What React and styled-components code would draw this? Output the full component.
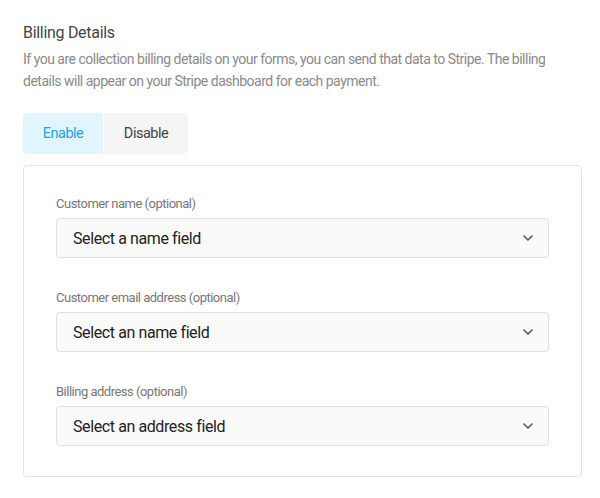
import React from "react";
import styled, { createGlobalStyle } from "styled-components";

const Global = createGlobalStyle`
  html, body { margin: 0; padding: 0; background: #ffffff; }
  body { font-family: Roboto, "Liberation Sans", sans-serif; -webkit-font-smoothing: antialiased; }
  * { box-sizing: border-box; }
`;

const Page = styled.div`
  width: 600px;
  padding: 23px 18px 0 23px;
`;

const Title = styled.h2`
  margin: 0 0 5px;
  font-size: 16px;
  line-height: 20px;
  font-weight: 400;
  letter-spacing: -0.3px;
  color: #444444;
`;

const Description = styled.p`
  margin: 0;
  font-size: 14px;
  line-height: 22px;
  letter-spacing: -0.5px;
  color: #8a8a8a;
  width: 540px;
`;

const Toggle = styled.div`
  display: inline-flex;
  gap: 1px;
  margin-top: 21px;
  border-radius: 4px;
  overflow: hidden;
`;

const ToggleButton = styled.button`
  height: 41px;
  padding: 0;
  width: ${(p) => p.$w}px;
  border: none;
  font-family: inherit;
  font-size: 14.5px;
  letter-spacing: -0.5px;
  background: ${(p) => (p.$active ? "#e1f5fe" : "#f5f5f5")};
  color: ${(p) => (p.$active ? "#1ea5e4" : "#444444")};
  cursor: pointer;
`;

const Panel = styled.div`
  margin-top: 11px;
  width: 559px;
  border: 1px solid #e2e2e2;
  border-radius: 4px;
  padding: 30px 32px 30px;
  display: flex;
  flex-direction: column;
  gap: 32px;
`;

const Field = styled.div`
  display: flex;
  flex-direction: column;
  gap: 6px;
`;

const Label = styled.label`
  font-size: 13px;
  line-height: 16px;
  letter-spacing: -0.5px;
  color: #777777;
`;

const Select = styled.div`
  height: 40px;
  border: 1px solid #e0e0e0;
  border-radius: 4px;
  background: #fafafa;
  display: flex;
  align-items: center;
  justify-content: space-between;
  padding: 0 15px 0 16px;
  font-size: 16px;
  letter-spacing: -0.4px;
  color: #222222;
`;

const Chevron = () => (
  <svg width="10" height="6" viewBox="0 0 10 6" fill="none">
    <path d="M1 1l4 4 4-4" stroke="#555" strokeWidth="1.6" strokeLinecap="round" strokeLinejoin="round" />
  </svg>
);

const fields = [
  { label: "Customer name (optional)", value: "Select a name field" },
  { label: "Customer email address (optional)", value: "Select an name field" },
  { label: "Billing address (optional)", value: "Select an address field" },
];

export default function App() {
  return (
    <Page>
      <Global />
      <Title>Billing Details</Title>
      <Description>
        If you are collection billing details on your forms, you can send that data to Stripe. The billing details will appear on your Stripe dashboard for each payment.
      </Description>
      <Toggle>
        <ToggleButton $active $w={80}>Enable</ToggleButton>
        <ToggleButton $w={84}>Disable</ToggleButton>
      </Toggle>
      <Panel>
        {fields.map((f) => (
          <Field key={f.label}>
            <Label>{f.label}</Label>
            <Select>
              <span>{f.value}</span>
              <Chevron />
            </Select>
          </Field>
        ))}
      </Panel>
    </Page>
  );
}
